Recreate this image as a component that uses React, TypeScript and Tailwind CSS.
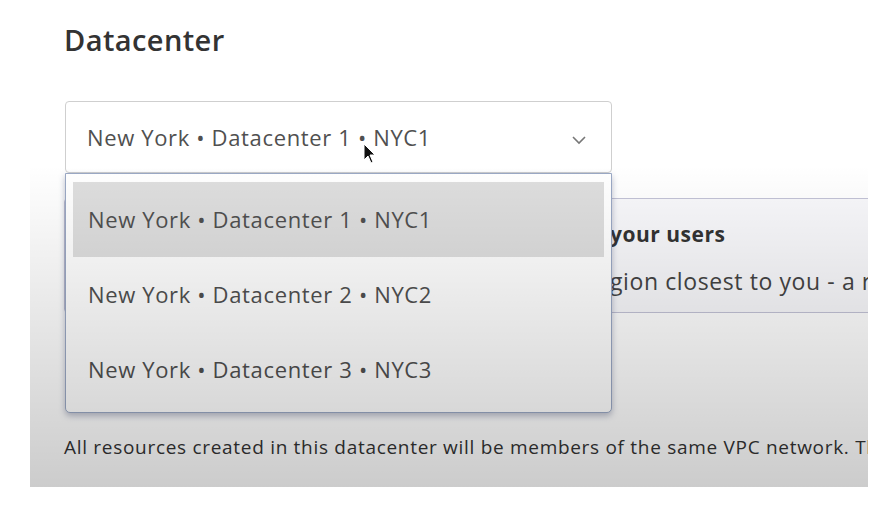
import React from "react";

const items = [
  "New York • Datacenter 1 • NYC1",
  "New York • Datacenter 2 • NYC2",
  "New York • Datacenter 3 • NYC3",
];

export default function App() {
  return (
    <div
      className="relative w-[886px] h-[512px] bg-white overflow-hidden"
      style={{ fontFamily: "'Open Sans', Lato, sans-serif" }}
    >
      <div className="absolute left-[30px] top-0 w-[838px] h-[487px] overflow-hidden bg-white">
        <div className="pl-[34px] pt-[21px] flex flex-col">
          <h2 className="text-[29px] leading-[38px] font-semibold text-[#333] tracking-[0.4px]">Datacenter</h2>

          <div className="relative mt-[42px] ml-[1px] w-[547px]">
            <div className="h-[72px] rounded-[4px] border border-[#cfcfcf] bg-white flex items-center justify-between pl-[21px] pr-[24px]">
              <span className="text-[22px] tracking-[0.65px] text-[#505050] whitespace-nowrap">{items[0]}</span>
              <svg width="16" height="10" viewBox="0 0 16 10" className="mt-[6px]">
                <path d="M2 2 L8 8 L14 2" fill="none" stroke="#777" strokeWidth="1.6" />
              </svg>
            </div>

            <div className="absolute left-0 top-[72px] w-[547px] h-[240px] rounded-b-[5px] border border-[#9aa8c4] bg-white shadow-[0_3px_6px_rgba(60,70,110,0.35)] px-[7px] pt-[8px] z-10 flex flex-col">
              {items.map((t, i) => (
                <div
                  key={t}
                  className={
                    "h-[75px] shrink-0 flex items-center pl-[15px] text-[22px] tracking-[0.65px] text-[#505050] whitespace-nowrap " +
                    (i === 0 ? "bg-[#dedede]" : "")
                  }
                >
                  {t}
                </div>
              ))}
            </div>

            <svg
              className="absolute left-[298px] top-[42px] z-20"
              width="14"
              height="22"
              viewBox="0 0 14 22"
            >
              <path d="M1 1 L1 17 L5 13 L8 20 L10 19 L7 12 L12 12 Z" fill="#111" stroke="#fff" strokeWidth="1" />
            </svg>
          </div>

          <div className="mt-[25px] w-[900px] h-[115px] border border-[#c3c3d6] rounded-[4px] bg-[#f8f8fb] flex flex-col pt-[21px]">
            <div className="flex whitespace-nowrap h-[30px] items-center">
              <span className="w-[545px] shrink-0" />
              <span className="text-[21px] font-bold text-[#333] tracking-[0.5px]">your users</span>
            </div>
            <div className="flex whitespace-nowrap mt-[16px] h-[30px] items-center">
              <span className="w-[545px] shrink-0" />
              <span className="text-[23px] text-[#444] tracking-[0.6px]">gion closest to you - a region near your users</span>
            </div>
          </div>

          <p className="mt-[120px] text-[19px] leading-[28px] tracking-[0.7px] text-[#333] whitespace-nowrap">
            All resources created in this datacenter will be members of the same VPC network. They can communicate securely over their private IP addresses.
          </p>
        </div>

        <div className="pointer-events-none absolute left-0 right-0 top-[165px] bottom-0 bg-gradient-to-b from-[rgba(0,0,0,0)] to-[rgba(0,0,0,0.2)] z-30" />
      </div>
    </div>
  );
}
